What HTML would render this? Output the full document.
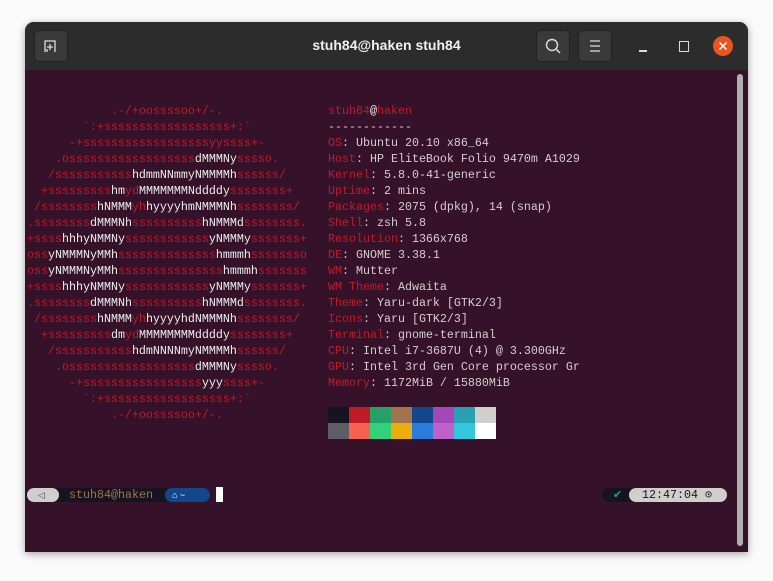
<!DOCTYPE html>
<html><head><meta charset="utf-8"><style>
html,body{margin:0;padding:0;width:773px;height:581px;background:#fafafa;overflow:hidden;font-family:"Liberation Sans",sans-serif}
.win{position:absolute;left:25px;top:22px;width:723px;height:530px;border-radius:9px 9px 0 0;background:#35112a;box-shadow:0 2px 8px rgba(0,0,0,.35);overflow:hidden}
.tb{position:absolute;left:0;top:0;width:723px;height:48px;background:#2c2c2c}
.btn{position:absolute;top:8px;width:34px;height:32px;background:#3a3a3a;border-radius:5px;border:1px solid #232323;box-sizing:border-box}
.title{position:absolute;left:0;width:723px;top:15px;text-align:center;color:#f0f0f0;font-weight:bold;font-size:14px}
.t{position:absolute;font-family:"Liberation Mono",monospace;font-size:11.67px;line-height:16px;white-space:pre;color:#c01c28}
.w{color:#eeeeec}
.v{color:#d3d0cb}
.sb{position:absolute;left:712px;top:52px;width:6px;height:472px;background:#b0aeac;border-radius:3px}
.blk{position:absolute;width:21px;height:16px}
</style></head><body>
<div class="win">
 <div class="tb">
  <div class="btn" style="left:9px"><svg width="32" height="30" viewBox="0 0 32 30"><path d="M10 21V10h10v11" fill="none" stroke="#ddd" stroke-width="1.3"/><path d="M12 21v-3M15 13v6M12 16h6" stroke="#ddd" stroke-width="1.3"/></svg></div>
  <div class="title">stuh84@haken stuh84</div>
  <div class="btn" style="left:511px"><svg width="32" height="30" viewBox="0 0 32 30"><circle cx="15" cy="14" r="5.5" fill="none" stroke="#ddd" stroke-width="1.4"/><path d="M19 18l4 4" stroke="#ddd" stroke-width="1.4"/></svg></div>
  <div class="btn" style="left:553px"><svg width="32" height="30" viewBox="0 0 32 30"><path d="M11 10h10M11 15h10M11 20h10" stroke="#ddd" stroke-width="1.3"/></svg></div>
  <div style="position:absolute;left:614px;top:28px;width:8px;height:1.5px;background:#ddd"></div>
  <div style="position:absolute;left:654px;top:19px;width:8px;height:9px;border:1.5px solid #ddd"></div>
  <div style="position:absolute;left:688px;top:14px;width:20px;height:20px;border-radius:50%;background:#e95420"><svg width="20" height="20"><path d="M6.5 6.5l7 7M13.5 6.5l-7 7" stroke="#fff" stroke-width="1.5"/></svg></div>
 </div>
 <div class="sb"></div>
 <div class="t" style="left:2px;top:81px">            .-/+oossssoo+/-.
        `:+ssssssssssssssssss+:`
      -+ssssssssssssssssssyyssss+-
    .ossssssssssssssssss<span class="w">dMMMNy</span>sssso.
   /sssssssssss<span class="w">hdmmNNmmyNMMMMh</span>ssssss/
  +sssssssss<span class="w">hm</span>yd<span class="w">MMMMMMMNddddy</span>ssssssss+
 /ssssssss<span class="w">hNMMM</span>yh<span class="w">hyyyyhmNMMMNh</span>ssssssss/
.ssssssss<span class="w">dMMMNh</span>ssssssssss<span class="w">hNMMMd</span>ssssssss.
+ssss<span class="w">hhhyNMMNy</span>ssssssssssss<span class="w">yNMMMy</span>sssssss+
oss<span class="w">yNMMMNyMMh</span>ssssssssssssss<span class="w">hmmmh</span>ssssssso
oss<span class="w">yNMMMNyMMh</span>sssssssssssssss<span class="w">hmmmh</span>sssssss
+ssss<span class="w">hhhyNMMNy</span>ssssssssssss<span class="w">yNMMMy</span>sssssss+
.ssssssss<span class="w">dMMMNh</span>ssssssssss<span class="w">hNMMMd</span>ssssssss.
 /ssssssss<span class="w">hNMMM</span>yh<span class="w">hyyyyhdNMMMNh</span>ssssssss/
  +sssssssss<span class="w">dm</span>yd<span class="w">MMMMMMMMddddy</span>ssssssss+
   /sssssssssss<span class="w">hdmNNNNmyNMMMMh</span>ssssss/
    .ossssssssssssssssss<span class="w">dMMMNy</span>sssso.
      -+sssssssssssssssss<span class="w">yyy</span>ssss+-
        `:+ssssssssssssssssss+:`
            .-/+oossssoo+/-.</div>
 <div class="t" style="left:303px;top:81px">stuh84<span class="w">@</span>haken
<span class="v">------------</span>
OS<span class="v">: Ubuntu 20.10 x86_64</span>
Host<span class="v">: HP EliteBook Folio 9470m A1029</span>
Kernel<span class="v">: 5.8.0-41-generic</span>
Uptime<span class="v">: 2 mins</span>
Packages<span class="v">: 2075 (dpkg), 14 (snap)</span>
Shell<span class="v">: zsh 5.8</span>
Resolution<span class="v">: 1366x768</span>
DE<span class="v">: GNOME 3.38.1</span>
WM<span class="v">: Mutter</span>
WM Theme<span class="v">: Adwaita</span>
Theme<span class="v">: Yaru-dark [GTK2/3]</span>
Icons<span class="v">: Yaru [GTK2/3]</span>
Terminal<span class="v">: gnome-terminal</span>
CPU<span class="v">: Intel i7-3687U (4) @ 3.300GHz</span>
GPU<span class="v">: Intel 3rd Gen Core processor Gr</span>
Memory<span class="v">: 1172MiB / 15880MiB</span></div>
 <div class="blk" style="left:303px;top:385px;background:#171421"></div>
 <div class="blk" style="left:324px;top:385px;background:#c01c28"></div>
 <div class="blk" style="left:345px;top:385px;background:#26a269"></div>
 <div class="blk" style="left:366px;top:385px;background:#a2734c"></div>
 <div class="blk" style="left:387px;top:385px;background:#12488b"></div>
 <div class="blk" style="left:408px;top:385px;background:#a347ba"></div>
 <div class="blk" style="left:429px;top:385px;background:#2aa1b3"></div>
 <div class="blk" style="left:450px;top:385px;background:#d0cfcc"></div>
 <div class="blk" style="left:303px;top:401px;background:#5e5c64"></div>
 <div class="blk" style="left:324px;top:401px;background:#f66151"></div>
 <div class="blk" style="left:345px;top:401px;background:#33d17a"></div>
 <div class="blk" style="left:366px;top:401px;background:#e9ad0c"></div>
 <div class="blk" style="left:387px;top:401px;background:#2a7bde"></div>
 <div class="blk" style="left:408px;top:401px;background:#c061cb"></div>
 <div class="blk" style="left:429px;top:401px;background:#33c7de"></div>
 <div class="blk" style="left:450px;top:401px;background:#ffffff"></div>
 <!-- prompt -->
 <div style="position:absolute;left:2px;top:466px;width:180px;height:14px;background:#171421;border-radius:7px"></div>
 <div style="position:absolute;left:2px;top:466px;width:32px;height:14px;background:#d0cfcc;border-radius:7px"></div>
 <div style="position:absolute;left:13px;top:468px;color:#5a3a70;font-size:9px;line-height:10px">◁</div>
 <div class="t" style="left:44px;top:465px;color:#a2734c">stuh84@haken</div>
 <div style="position:absolute;left:140px;top:466px;width:45px;height:14px;background:#12488b;border-radius:7px;color:#fff;font-size:9px;line-height:14px;text-indent:7px">⌂ ~</div>
 <div style="position:absolute;left:191px;top:465px;width:7px;height:15px;background:#fff"></div>
 <div style="position:absolute;left:577px;top:466px;width:40px;height:14px;background:#171421;border-radius:7px;color:#26a269;font-size:11px;line-height:14px;text-indent:11px">✔</div>
 <div style="position:absolute;left:604px;top:466px;width:98px;height:14px;background:#d0cfcc;border-radius:7px"></div>
 <div class="t" style="left:617px;top:465px;color:#171421">12:47:04 ⊙</div>
</div>
</body></html>
